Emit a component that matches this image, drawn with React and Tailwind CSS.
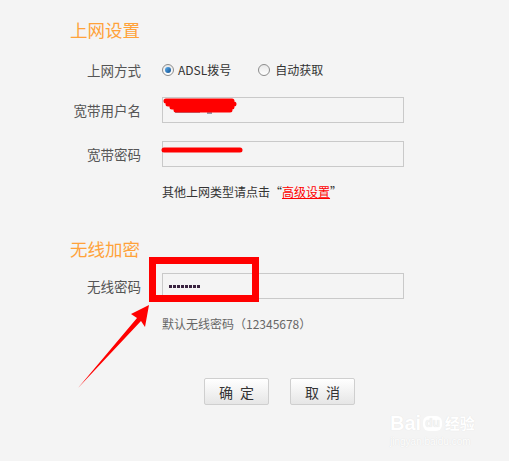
import React from "react";

const font = { fontFamily: '"Noto Sans CJK SC", "Noto Sans", sans-serif' };

function Radio({ checked }) {
  return (
    <span className="relative flex h-[12px] w-[12px] items-center justify-center rounded-full border border-[#8c8c8c] bg-gradient-to-b from-[#e8e8e8] to-[#ffffff]">
      {checked && (
        <span className="h-[6px] w-[6px] rounded-full bg-gradient-to-br from-[#5fb0f0] to-[#0b4f8f]" />
      )}
    </span>
  );
}

function Row({ label, children, className = "" }) {
  return (
    <div className={"flex items-center " + className}>
      <div className="w-[141px] shrink-0 text-right text-[13.5px] leading-[16px] text-[#555]">{label}</div>
      <div className="ml-[21px] flex items-center">{children}</div>
    </div>
  );
}

function Input({ children }) {
  return (
    <div className="relative flex h-[26px] w-[242px] items-center border border-[#c9c9c9] bg-[#f4f4f4] px-[6px]">
      {children}
    </div>
  );
}

function Button({ a, b }) {
  return (
    <div className="flex h-[27px] w-[65px] items-center justify-center gap-[7px] rounded-[2px] border border-[#cfcfcf] bg-gradient-to-b from-[#ffffff] to-[#e6e6e6] text-[14px] leading-[16px] text-[#333]">
      <span>{a}</span>
      <span>{b}</span>
    </div>
  );
}

export default function App() {
  const dots = [0, 1, 2, 3, 4, 5, 6, 7];
  return (
    <div className="relative h-[461px] w-[509px] overflow-hidden bg-[#f4f4f4]" style={font}>
      <div className="flex flex-col">
        <div className="mt-[20px] pl-[70px] text-[17.5px] leading-[20px] text-[#ffa23a]">上网设置</div>

        <Row label="上网方式" className="mt-[20px] h-[20px]">
          <div className="flex items-center gap-[4px]">
            <Radio checked />
            <span className="text-[12px] leading-[16px] text-[#333]">ADSL拨号</span>
          </div>
          <div className="ml-[27px] flex items-center gap-[5px]">
            <Radio />
            <span className="text-[12px] leading-[16px] text-[#333]">自动获取</span>
          </div>
        </Row>

        <Row label="宽带用户名" className="mt-[17px] h-[26px]">
          <Input />
        </Row>

        <Row label="宽带密码" className="mt-[18px] h-[26px]">
          <Input />
        </Row>

        <div className="mt-[17px] h-[16px] pl-[162px] text-[12px] leading-[16px] text-[#333]">
          其他上网类型请点击“<span className="text-[#ff0000] underline">高级设置</span>”
        </div>

        <div className="mt-[39px] pl-[70px] text-[17.5px] leading-[20px] text-[#ffa23a]">无线加密</div>

        <Row label="无线密码" className="mt-[14px] h-[26px]">
          <Input>
            <div className="flex gap-[1px]">
              {dots.map((i) => (
                <span key={i} className="h-[3px] w-[3px] bg-[#3a2340]" />
              ))}
            </div>
          </Input>
        </Row>

        <div className="mt-[17px] h-[16px] pl-[162px] text-[12px] leading-[16px] text-[#666]">
          默认无线密码（12345678）
        </div>

        <div className="mt-[46px] flex gap-[21px] pl-[204px]">
          <Button a="确" b="定" />
          <Button a="取" b="消" />
        </div>
      </div>

      {/* annotations overlay */}
      <svg className="pointer-events-none absolute left-0 top-0" width="509" height="461" viewBox="0 0 509 461">
        <path d="M175 112 L200 112 M207 113 L212 113" stroke="#3a3a5a" strokeWidth="1" fill="none" />
        {/* scribble over username */}
        <path d="M166 101 L232 101 M168 104 L234 104 M172 107 L232 107 M176 110 L230 110" stroke="#ff0000" strokeWidth="5" strokeLinecap="round" fill="none" />
        {/* scribble over password */}
        <path d="M164 150 L240 150" stroke="#ff0000" strokeWidth="5" strokeLinecap="round" fill="none" />
        {/* red box */}
        <rect x="152.5" y="260.5" width="103" height="38" fill="none" stroke="#ff0000" strokeWidth="7" />
        {/* arrow */}
        <polygon points="149,305 131,314 137,318 78,388 141,321 145,327" fill="#ff0000" />
      </svg>

      {/* watermark */}
      <div className="pointer-events-none absolute left-[390px] top-[412px] flex flex-col items-start">
        <div className="flex items-center text-[20px] font-bold leading-[22px] text-white" style={{ fontFamily: '"Liberation Sans", sans-serif', textShadow: "0 0 1px #dcdcdc" }}>
          <span>Bai</span>
          <span className="ml-[2px] rounded-[6px] bg-white px-[2px] text-[12px] leading-[15px] text-[#f4f4f4]">du</span>
          <span className="ml-[3px] text-[15px]" style={font}>经验</span>
        </div>
        <div className="mt-[2px] text-[10px] leading-[12px] text-white" style={{ fontFamily: '"Liberation Sans", sans-serif', textShadow: "0 0 1px #d4d4d4" }}>
          jingyan.baidu.com
        </div>
      </div>
    </div>
  );
}
